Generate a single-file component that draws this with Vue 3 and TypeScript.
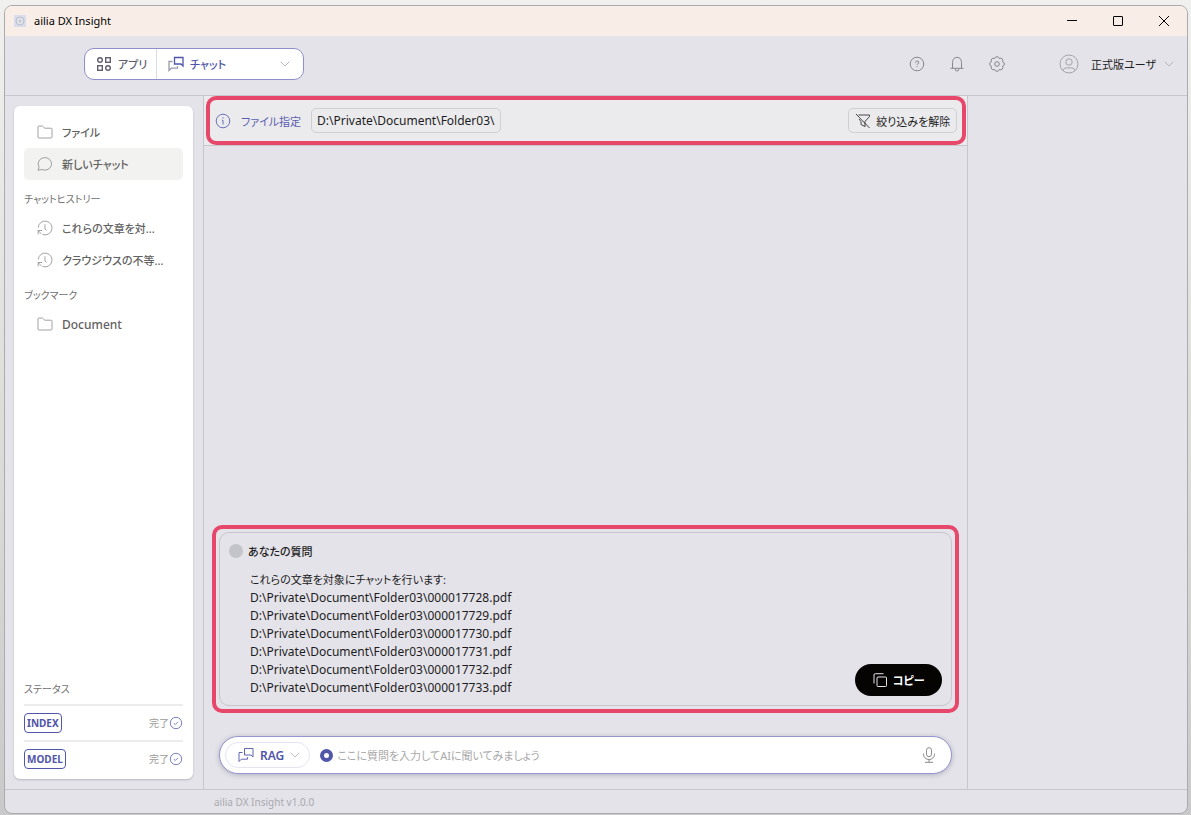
<script setup lang="ts">
import { ref } from 'vue'

interface Entry {
  label: string
  icon: 'folder' | 'chat' | 'history'
  active?: boolean
  latin?: boolean
}

interface Section {
  title?: string
  entries: Entry[]
}

const sections: Section[] = [
  {
    entries: [
      { label: 'ファイル', icon: 'folder' },
      { label: '新しいチャット', icon: 'chat', active: true },
    ],
  },
  {
    title: 'チャットヒストリー',
    entries: [
      { label: 'これらの文章を対...', icon: 'history' },
      { label: 'クラウジウスの不等...', icon: 'history' },
    ],
  },
  { title: 'ブックマーク', entries: [{ label: 'Document', icon: 'folder', latin: true }] },
]

const statuses = ['INDEX', 'MODEL']

const files = [
  '000017728.pdf',
  '000017729.pdf',
  '000017730.pdf',
  '000017731.pdf',
  '000017732.pdf',
  '000017733.pdf',
]

const folder = 'D:\\Private\\Document\\Folder03\\'
const question = ref('')
</script>

<template>
  <div class="desktop">
    <div class="window">
      <header class="titlebar">
        <svg class="app-icon" viewBox="0 0 12 12" aria-hidden="true">
          <rect width="12" height="12" fill="#d9dcea" />
          <circle cx="6" cy="6" r="4" fill="#e2e3ea" stroke="#b9bccd" />
          <circle cx="6" cy="6" r="1.6" fill="#c5c8d8" />
        </svg>
        <span class="app-name">ailia DX Insight</span>
        <div class="window-buttons">
          <button type="button" aria-label="最小化">
            <svg viewBox="0 0 12 12"><path d="M1 5.5h10" /></svg>
          </button>
          <button type="button" aria-label="最大化">
            <svg viewBox="0 0 12 12"><rect x="1.5" y="1.5" width="9" height="9" rx="0.5" /></svg>
          </button>
          <button type="button" aria-label="閉じる">
            <svg viewBox="0 0 12 12"><path d="M1 1l10 10M11 1L1 11" /></svg>
          </button>
        </div>
      </header>

      <nav class="toolbar">
        <div class="switcher">
          <button type="button" class="apps">
            <svg class="i16" viewBox="0 0 16 16" stroke-width="1.4">
              <circle cx="4" cy="4" r="2.3" />
              <rect x="9.7" y="1.7" width="4.6" height="4.6" />
              <rect x="1.7" y="9.7" width="4.6" height="4.6" />
              <circle cx="12" cy="12" r="2.3" />
            </svg>
            <span class="text">アプリ</span>
          </button>
          <button type="button" class="mode">
            <svg class="i16" viewBox="0 0 16 16" stroke-width="1.3">
              <path d="M6.5 1.500h8.500v8.500l-2-2H6.500z" />
              <path class="dim" d="M4.500 5.500H1v9l2.300-2.300h6.200v-2" />
            </svg>
            <span class="text">チャット</span>
            <svg class="chevron" viewBox="0 0 10 6"><path d="M.7.7L5 5 9.300.7" /></svg>
          </button>
        </div>
        <div class="tools">
          <button type="button" aria-label="ヘルプ">
            <svg class="i16" viewBox="0 0 16 16">
              <circle cx="8" cy="8" r="6.8" />
              <path d="M6.500 6.600a1.600 1.600 0 1 1 2.400 1.300c-.6.3-.9.6-.9 1.100M8 10.200v1" />
            </svg>
          </button>
          <button type="button" aria-label="通知">
            <svg class="i16" viewBox="0 0 16 16">
              <path d="M1.500 12.300h13M3.500 12.300V6.500C3.500 3.500 5.300 1.300 8 1.300s4.500 2.200 4.500 5.200v5.800M6.200 12.500v.7a1.800 1.800 0 0 0 3.600 0v-.7" />
            </svg>
          </button>
          <button type="button" aria-label="設定">
            <svg class="i16" viewBox="0 0 16 16">
              <path
                d="M13.450 10.260A2.300 2.300 0 0 1 10.260 13.450A2.300 2.300 0 0 1 5.740 13.450A2.300 2.300 0 0 1 2.550 10.260A2.300 2.300 0 0 1 2.550 5.740A2.300 2.300 0 0 1 5.740 2.550A2.300 2.300 0 0 1 10.260 2.550A2.300 2.300 0 0 1 13.450 5.740A2.300 2.300 0 0 1 13.450 10.260z"
              />
              <circle cx="8" cy="8" r="2.300" />
            </svg>
          </button>
        </div>
        <button type="button" class="user">
          <svg class="avatar" viewBox="0 0 20 20">
            <circle cx="10" cy="10" r="9" />
            <circle cx="10" cy="8" r="3.200" />
            <path d="M4 16.500c.5-2.300 2.500-2.700 6-2.700s5.500.4 6 2.700" />
          </svg>
          <span class="text">正式版ユーザ</span>
          <svg class="chevron" viewBox="0 0 10 6"><path d="M.7.7L5 5 9.300.7" /></svg>
        </button>
      </nav>

      <div class="body">
        <aside class="side">
          <div class="panel">
            <section v-for="(section, s) in sections" :key="s">
              <h2 v-if="section.title">{{ section.title }}</h2>
              <button
                v-for="entry in section.entries"
                :key="entry.label"
                type="button"
                class="entry"
                :class="{ active: entry.active }"
              >
                <svg v-if="entry.icon === 'folder'" class="i16" viewBox="0 0 16 16">
                  <path d="M1 13V3a1 1 0 0 1 1-1h3.500l2.300 2.200H14a1 1 0 0 1 1 1V13a1 1 0 0 1-1 1H2a1 1 0 0 1-1-1z" />
                </svg>
                <svg v-else-if="entry.icon === 'chat'" class="i16" viewBox="0 0 16 16">
                  <path d="M1.200 14.300l.8-3.400A6.700 6.300 0 1 1 4.900 13.500z" />
                </svg>
                <svg v-else class="i16" viewBox="0 0 16 16">
                  <path d="M1.200 7.500A6.900 6.900 0 1 1 5.500 14.400M1.200 14.500v-4h4M1.200 10.500l3 3.300M8 4.300V9l1.600 1.200" />
                </svg>
                <span class="text" :class="{ latin: entry.latin }">{{ entry.label }}</span>
              </button>
            </section>

            <section class="status">
              <h2>ステータス</h2>
              <div v-for="name in statuses" :key="name" class="status-row">
                <strong>{{ name }}</strong>
                <span>完了</span>
                <svg viewBox="0 0 14 14">
                  <circle cx="7" cy="7" r="5.700" />
                  <path d="M4.800 7.200l1.500 1.300 2.700-2.700" />
                </svg>
              </div>
            </section>
          </div>
        </aside>

        <main class="main">
          <div class="filter framed">
            <svg class="i16" viewBox="0 0 16 16">
              <circle cx="8" cy="8" r="6.800" />
              <path d="M8 4.300v1.200M7 7.300h1v4.200" />
            </svg>
            <span class="filter-label text">ファイル指定</span>
            <span class="path">{{ folder }}</span>
            <button type="button" class="clear">
              <svg class="i16" viewBox="0 0 16 16">
                <path d="M3.500 2h11v1.500L10 8.500v5l-4-2V8.500L4 6M1 1l13.500 14" />
              </svg>
              <span class="text">絞り込みを解除</span>
            </button>
          </div>

          <div class="chat">
            <article class="question framed">
              <h3><i class="dot"></i><span class="text">あなたの質問</span></h3>
              <div class="message">
                <p class="lead">これらの文章を対象にチャットを行います:</p>
                <p v-for="file in files" :key="file">{{ folder }}{{ file }}</p>
              </div>
              <button type="button" class="copy">
                <svg viewBox="0 0 14 14">
                  <rect x="4" y="4" width="9.500" height="9.500" rx="1" />
                  <path d="M1 10.500V2a1.300 1.300 0 0 1 1.300-1.300H10.500" />
                </svg>
                <span class="text">コピー</span>
              </button>
            </article>

            <form class="ask" @submit.prevent>
              <button type="button" class="rag">
                <svg class="i16" viewBox="0 0 16 16">
                  <path d="M6.500 1.500h8.500v8.500l-2-2H6.500z" />
                  <path d="M4.500 5.500H1v9l2.300-2.300h6.200v-2" />
                </svg>
                <span class="text latin">RAG</span>
                <svg class="chevron" viewBox="0 0 10 6"><path d="M.7.7L5 5 9.300.7" /></svg>
              </button>
              <i class="ring"></i>
              <input
                v-model="question"
                type="text"
                class="text"
                aria-label="質問"
                placeholder="ここに質問を入力してAIに聞いてみましょう"
              />
              <button type="button" class="mic" aria-label="音声入力">
                <svg class="i16" viewBox="0 0 16 16">
                  <rect x="5.500" y=".7" width="5" height="9" rx="2.500" />
                  <path d="M2.500 6.500v1a5.500 5 0 0 0 11 0v-1M8 12.500v2.700M4 15.300h8" />
                </svg>
              </button>
            </form>
          </div>
        </main>

        <aside class="extra"></aside>
      </div>

      <footer class="footer">ailia DX Insight v1.0.0</footer>
    </div>
  </div>
</template>

<style>
body {
  margin: 0;
}
</style>

<style scoped>
.desktop {
  box-sizing: border-box;
  height: 100vh;
  min-height: 560px;
  padding: 5px 3px 1px 4px;
  background: linear-gradient(#f0f0ee, #deded9 50%, #c9c9c9);
  font-family: "Noto Sans", "Noto Sans CJK JP", sans-serif;
  font-feature-settings: "palt";
  font-size: 12px;
  line-height: 18px;
  color: #1c1c22;
}

.desktop *,
.desktop *::after {
  box-sizing: border-box;
}

button,
input {
  font: inherit;
  font-feature-settings: inherit;
  color: inherit;
  margin: 0;
  padding: 0;
  border: 0;
  background: none;
}

h2,
h3,
p {
  margin: 0;
  font-weight: 400;
  font-size: inherit;
}

svg {
  display: block;
  flex: none;
  fill: none;
  stroke: currentColor;
}

.text {
  padding-top: 2px;
  font-size: 11px;
}

.text.latin {
  font-size: 12px;
}

.i16 {
  width: 16px;
  height: 16px;
}

.chevron {
  width: 10px;
  height: 6px;
  color: #b5b5bd;
}

.window {
  display: flex;
  flex-direction: column;
  height: 100%;
  overflow: hidden;
  border: 1px solid #ababaf;
  border-radius: 8px;
  background: #e4e3e9;
}

.titlebar {
  display: flex;
  align-items: center;
  height: 30px;
  padding-left: 9px;
  background: #f8eee7;
  color: #000;
}

.app-icon {
  width: 12px;
  height: 12px;
  stroke: none;
}

.app-name {
  margin-left: 8px;
  font-size: 11px;
}

.window-buttons {
  display: flex;
  margin-left: auto;
}

.window-buttons button {
  display: grid;
  place-items: center;
  width: 46px;
  height: 30px;
}

.window-buttons svg {
  width: 12px;
  height: 12px;
}

.toolbar {
  display: flex;
  align-items: center;
  height: 60px;
  padding: 0 13px 4px 79px;
  border-bottom: 1px solid #c6c6cc;
}

.switcher {
  display: flex;
  width: 220px;
  height: 32px;
  border: 1px solid #8e8ecb;
  border-radius: 10px;
  background: #fff;
  font-weight: 500;
}

.switcher button,
.user {
  display: flex;
  align-items: center;
}

.apps {
  gap: 6px;
  width: 72px;
  padding-left: 11px;
  border-right: 1px solid #dcdce4;
  color: #5f5f70;
}

.switcher .mode {
  flex: 1;
  gap: 6px;
  padding: 0 13px 0 11px;
  color: #4f55a8;
}

.mode .dim {
  stroke: #9b9bac;
}

.mode .chevron {
  margin-left: auto;
}

.tools {
  display: flex;
  gap: 24px;
  margin-left: auto;
  color: #85858b;
}

.user {
  gap: 12px;
  margin-left: 54px;
}

.user .avatar {
  width: 20px;
  height: 20px;
  color: #a3a3ab;
}

.user .chevron {
  margin-left: -4px;
}

.body {
  display: flex;
  flex: 1;
  min-height: 0;
}

.side {
  flex: none;
  width: 199px;
  padding: 10px 10px 10px 9px;
  border-right: 1px solid #c6c6cc;
}

.panel {
  display: flex;
  flex-direction: column;
  height: 100%;
  padding: 10px 10px 3px;
  border-radius: 6px;
  background: #fff;
  box-shadow: 0 1px 2px rgba(60, 60, 80, 0.25);
  color: #626262;
}

.panel h2 {
  height: 32px;
  padding-top: 10px;
  font-size: 10px;
  color: #707070;
}

.entry {
  display: flex;
  align-items: center;
  gap: 9px;
  width: 100%;
  height: 32px;
  padding-left: 13px;
  border-radius: 5px;
  font-weight: 500;
  white-space: nowrap;
}

.entry svg {
  color: #8a8a8a;
  stroke-width: 0.8;
}

.entry.active {
  background: #f2f2f0;
}

.status {
  margin-top: auto;
}

.status h2 {
  padding-top: 8px;
}

.status-row {
  display: flex;
  align-items: center;
  height: 36px;
  border-top: 2px solid #ececec;
  color: #9a9a9a;
  font-size: 10px;
}

.status-row strong {
  margin-right: auto;
  padding: 0 2px;
  border: 1px solid #5057a9;
  border-radius: 4px;
  color: #4f55a8;
}

.status-row svg {
  width: 14px;
  height: 14px;
  color: #7c81c2;
}

.main {
  display: flex;
  flex: 764;
  flex-direction: column;
  min-width: 0;
}

.extra {
  flex: 219;
  border-left: 1px solid #c6c6cc;
}

.framed {
  position: relative;
}

.framed::after {
  content: "";
  position: absolute;
  inset: -8px;
  border: 4px solid #e8476c;
  border-radius: 10px;
  pointer-events: none;
}

.filter {
  display: flex;
  align-items: center;
  height: 50px;
  padding: 0 10px 0 11px;
  border-bottom: 1px solid #c6c6cc;
  background: #ebebed;
}

.filter::after {
  inset: 0 1px 0 2px;
}

.filter > svg,
.filter-label {
  color: #5a60b0;
}

.filter > svg {
  stroke-width: 0.9;
}

.filter-label {
  margin: 0 10px;
}

.path,
.clear {
  height: 25px;
  padding: 3px 5px 2px;
  border: 1px solid #d0d0d3;
  border-radius: 5px;
}

.clear {
  display: flex;
  align-items: center;
  gap: 5px;
  margin-left: auto;
  padding: 0 6px;
}

.clear svg {
  stroke-width: 0.8;
}

.chat {
  display: flex;
  flex: 1;
  flex-direction: column;
  justify-content: flex-end;
  gap: 30px;
  padding: 15px;
}

.question {
  display: grid;
  grid-template-columns: 1fr auto;
  align-items: end;
  padding: 8px 9px;
  border: 1px solid #c6c6cc;
  border-radius: 10px;
}

.question h3 {
  display: flex;
  grid-column: 1 / -1;
  align-items: center;
  gap: 5px;
  margin-bottom: 10px;
  font-weight: 500;
}

.dot {
  width: 14px;
  height: 14px;
  border-radius: 50%;
  background: #c3c3ca;
}

.message {
  padding-left: 21px;
}

.lead {
  font-size: 11px;
}

.copy {
  display: flex;
  align-items: center;
  justify-content: center;
  gap: 6px;
  width: 87px;
  height: 32px;
  margin-bottom: 1px;
  border-radius: 16px;
  background: #060303;
  color: #fff;
  font-weight: 600;
}

.copy svg {
  width: 14px;
  height: 14px;
  stroke-width: 0.9;
}

.ask {
  display: flex;
  align-items: center;
  height: 38px;
  padding: 0 14px 0 5px;
  border: 1px solid #9496cf;
  border-radius: 19px;
  background: #fff;
  box-shadow: 0 1px 5px rgba(60, 60, 90, 0.3);
}

.rag {
  display: flex;
  align-items: center;
  gap: 6px;
  height: 26px;
  padding: 0 9px 0 12px;
  border: 1px solid #e6e4f2;
  border-radius: 13px;
  color: #4f55a8;
  font-weight: 600;
}

.rag svg {
  stroke-width: 0.9;
}

.ring {
  width: 13px;
  height: 13px;
  margin: 0 4px 0 10px;
  border: 4px solid #5057a9;
  border-radius: 50%;
}

.ask input {
  flex: 1;
  min-width: 0;
  outline: 0;
}

.ask input::placeholder {
  color: #a9a9a9;
  opacity: 1;
}

.mic {
  color: #8a8a8a;
}

.footer {
  height: 24px;
  padding: 3px 0 0 209px;
  border-top: 1px solid #c6c6cc;
  font-size: 10px;
  color: #a9a9ae;
}
</style>
